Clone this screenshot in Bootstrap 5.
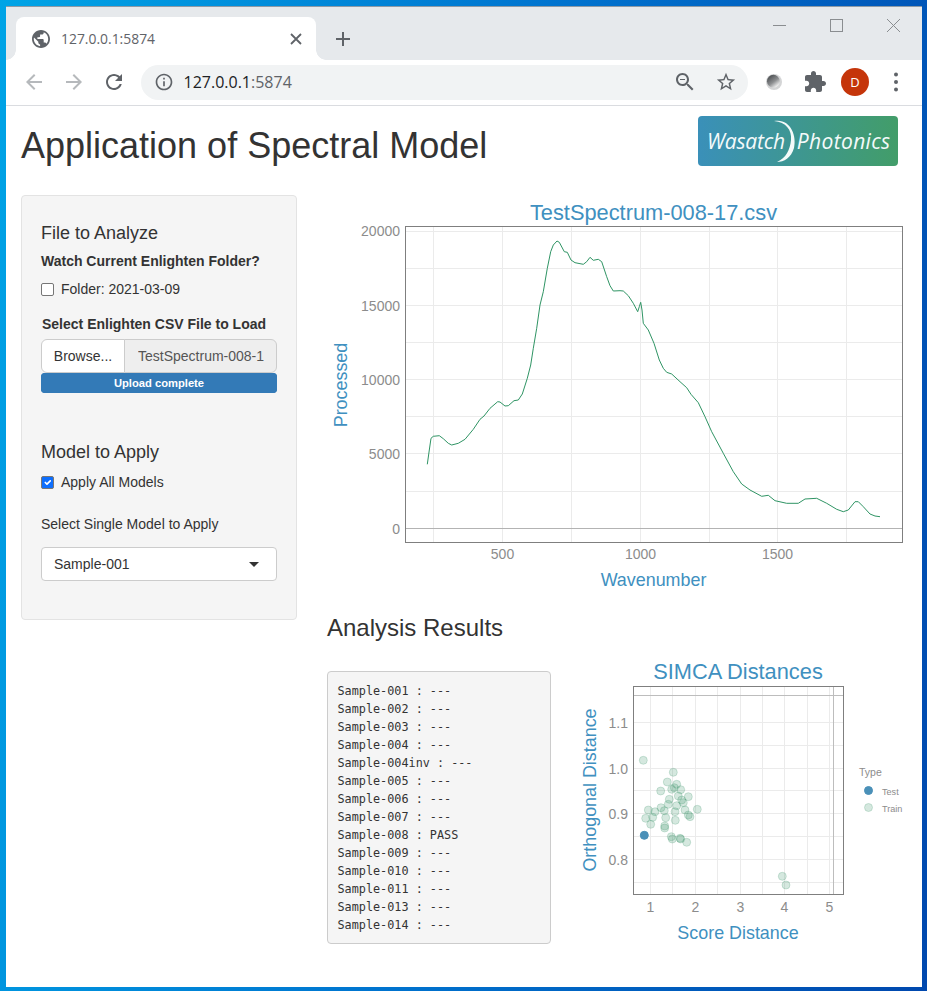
<!DOCTYPE html>
<html lang="en">
<head>
    <meta charset="UTF-8">
    <meta name="viewport" content="width=device-width, initial-scale=1.0">
    <title>Application of Spectral Model</title>
    <link href="https://cdn.jsdelivr.net/npm/bootstrap@5.3.3/dist/css/bootstrap.min.css" rel="stylesheet">
    <style>
      html, body { height: 100%; }
      body {
        background: linear-gradient(100deg, #00a4e6 0%, #0074cf 50%, #0048ae 100%);
        padding: 6px 5px 4px 6px;
        font-family: "Liberation Sans", Arial, sans-serif;
        font-size: 14px;
        line-height: 20px;
        color: #333;
        overflow: hidden;
      }
      .app-window {
        height: 100%;
        background: #fff;
        overflow: hidden;
      }
      /* browser chrome */
      .tab-strip {
        height: 54px;
        background: #e6e9ec;
        border-top: 1px solid #8d9aa6;
        padding-left: 10px;
      }
      .browser-tab {
        position: relative;
        width: 300px;
        height: 43px;
        margin-top: 10px;
        padding: 0 14px 0 16px;
        background: #fff;
        border-radius: 8px 8px 0 0;
        font-family: "Open Sans", sans-serif;
        font-size: 13.9px;
        color: #5f6368;
      }
      .browser-tab::before, .browser-tab::after {
        content: "";
        position: absolute;
        bottom: 0;
        width: 10px;
        height: 10px;
      }
      .browser-tab::before { left: -10px; background: radial-gradient(circle at 0 0, #e6e9ec 9.5px, #fff 10px); }
      .browser-tab::after { right: -10px; background: radial-gradient(circle at 100% 0, #e6e9ec 9.5px, #fff 10px); }
      .tab-label { margin-left: 11px; }
      .new-tab { margin: 10px 0 0 20px; }
      .win-btn { width: 57px; height: 37px; }
      .tool-bar {
        height: 46px;
        padding: 0 0 1px 15.5px;
        border-bottom: 1px solid #dadce0;
      }
      .tool-slot { width: 24px; height: 24px; }
      .tool-right { width: 28px; height: 28px; margin-left: 12.5px; }
      .omni-box {
        width: 607px;
        height: 35px;
        margin-left: 15px;
        padding: 0 11px 0 13px;
        background: #f1f3f4;
        border-radius: 18px;
        font-family: "Open Sans", sans-serif;
        font-size: 16px;
        color: #202124;
      }
      .omni-text { margin-left: 10px; }
      .omni-zoom { margin-right: 18px; }
      .omni-port { color: #5f6368; }
      .avatar-dot {
        border-radius: 50%;
        background: #c5350a;
        color: #fff;
        font-family: "Open Sans", sans-serif;
        font-size: 13px;
      }
      /* page */
      .page-head {
        padding: 10px 24px 0 15px;
        margin-bottom: 29px;
      }
      .page-title {
        margin: 10px 0 0;
        font-size: 36px;
        line-height: 40px;
        font-weight: 400;
      }
      .brand-logo {
        position: relative;
        width: 200px;
        height: 50px;
        padding-left: 9px;
        border-radius: 4px;
        background: linear-gradient(90deg, #3a90b9, #429d69);
        color: #f4fafa;
        font-family: "Open Sans", sans-serif;
        font-style: italic;
        font-size: 21px;
        letter-spacing: -.2px;
      }
      .brand-logo svg { position: absolute; left: 0; top: 0; }
      .brand-right { margin-left: 12px; letter-spacing: .35px; }
      .page-body { padding-left: 15px; gap: 30px; }
      .side-well {
        width: 276px;
        height: 425px;
        padding: 27px 19px 0;
        background: #f5f5f5;
        border: 1px solid #e3e3e3;
        border-radius: 4px;
      }
      .well-title {
        margin: 0;
        font-size: 18px;
        line-height: 20px;
        font-weight: 400;
      }
      .field-label { font-weight: 700; }
      .file-label { margin: 15px 0 5px; padding-left: 1px; }
      .model-title { margin: 49px 0 10px; }
      .single-label { margin-top: 22px; }
      .check-row { height: 20px; }
      .check-row .form-check-input {
        width: 13px;
        height: 13px;
        margin: 0 7px 0 0;
        border-color: #767676;
        border-radius: 2px;
      }
      .file-group { height: 34px; }
      .file-group .btn {
        width: 84px;
        padding: 6px 0;
        font-size: 14px;
        line-height: 20px;
        color: #333;
        background: #fff;
        border-color: #ccc;
      }
      .file-group .form-control {
        padding: 6px 12px 6px 13px;
        font-size: 14px;
        line-height: 20px;
        color: #555;
        background: #eee;
        border-color: #ccc;
      }
      .upload-bar { height: 20px; border-radius: 4px; background: #337ab7; }
      .upload-bar .progress-bar { background: #337ab7; font-size: 11.2px; font-weight: 700; }
      .model-pick {
        height: 34px;
        margin-top: 13px;
        padding: 0 17px 0 12px;
        background: #fff;
        border: 1px solid #ccc;
        border-radius: 4px;
      }
      .model-caret {
        border-top: 5px solid #333;
        border-left: 5px solid transparent;
        border-right: 5px solid transparent;
      }
      .main-area { width: 580px; }
      .main-area svg { display: block; }
      .section-title {
        margin: 20px 0 14px;
        font-size: 24px;
        line-height: 26px;
        font-weight: 400;
      }
      .result-box {
        width: 224px;
        margin: 16px 24px 0 0;
        padding: 9.5px;
        background: #f5f5f5;
        border: 1px solid #ccc;
        border-radius: 4px;
        color: #333;
        font-family: "DejaVu Sans Mono", monospace;
        font-size: 11.8px;
        line-height: 18px;
        overflow: hidden;
        flex: none;
      }
      .plot-svg text { font-family: "Liberation Sans", Arial, sans-serif; }
      .plot-title { font-size: 21.8px; fill: #4090c0; }
      .plot-axis { font-size: 17.9px; fill: #4090c0; }
      .plot-tick { font-size: 14px; fill: #8c8c8c; }
      .plot-legend { font-size: 10.5px; fill: #8c8c8c; }
      .plot-key { font-size: 9.1px; fill: #8c8c8c; }
    </style>
</head>
<body>
<div class="app-window d-flex flex-column">

  <div class="tab-strip d-flex">
    <div class="browser-tab d-flex align-items-center">
      <svg width="18" height="18" viewBox="2 2 20 20" fill="#5f6368"><path d="M12 2C6.48 2 2 6.48 2 12s4.48 10 10 10 10-4.48 10-10S17.52 2 12 2zm-1 17.93c-3.95-.49-7-3.85-7-7.93 0-.62.08-1.21.21-1.79L9 15v1c0 1.1.9 2 2 2v1.93zm6.9-2.54c-.26-.81-1-1.39-1.9-1.39h-1v-3c0-.55-.45-1-1-1H8v-2h2c.55 0 1-.45 1-1V7h2c1.1 0 2-.9 2-2v-.41c2.93 1.19 5 4.06 5 7.41 0 2.08-.8 3.97-2.1 5.39z"/></svg>
      <span class="tab-label flex-grow-1">127.0.0.1:5874</span>
      <svg width="12" height="12" viewBox="0 0 12 12" stroke="#5f6368" stroke-width="1.8"><path d="M1 1l10 10M11 1L1 11"/></svg>
    </div>
    <svg class="new-tab align-self-center" width="14" height="14" viewBox="0 0 14 14" stroke="#5f6368" stroke-width="2"><path d="M7 0v14M0 7h14"/></svg>
    <div class="ms-auto d-flex align-self-start">
      <div class="win-btn d-flex align-items-center justify-content-center"><svg width="13" height="13" viewBox="0 0 13 13" stroke="#8a8d90"><path d="M0 6.5h13"/></svg></div>
      <div class="win-btn d-flex align-items-center justify-content-center"><svg width="13" height="13" viewBox="0 0 13 13" fill="none" stroke="#8a8d90"><rect x=".5" y=".5" width="12" height="12"/></svg></div>
      <div class="win-btn d-flex align-items-center justify-content-center"><svg width="13" height="13" viewBox="0 0 13 13" stroke="#8a8d90"><path d="M0 0l13 13M13 0L0 13"/></svg></div>
    </div>
  </div>

  <div class="tool-bar d-flex align-items-center flex-shrink-0">
    <svg class="tool-slot me-3" viewBox="0 0 24 24" fill="#b6b9bc"><path d="M20 11H7.83l5.59-5.59L12 4l-8 8 8 8 1.41-1.41L7.83 13H20v-2z"/></svg>
    <svg class="tool-slot me-3" viewBox="0 0 24 24" fill="#b6b9bc"><path d="M4 11h12.17l-5.59-5.59L12 4l8 8-8 8-1.41-1.41L16.17 13H4v-2z"/></svg>
    <svg class="tool-slot" viewBox="0 0 24 24" fill="#5f6368"><path d="M17.65 6.35C16.2 4.9 14.21 4 12 4c-4.42 0-7.99 3.58-7.99 8s3.57 8 7.99 8c3.73 0 6.84-2.55 7.73-6h-2.08c-.82 2.33-3.04 4-5.65 4-3.31 0-6-2.69-6-6s2.69-6 6-6c1.66 0 3.14.69 4.22 1.78L13 11h7V4l-2.35 2.35z"/></svg>
    <div class="omni-box d-flex align-items-center">
      <svg width="20" height="20" viewBox="0 0 24 24" fill="#5f6368"><path d="M11 7h2v2h-2zm0 4h2v6h-2zm1-9C6.48 2 2 6.48 2 12s4.48 10 10 10 10-4.48 10-10S17.52 2 12 2zm0 18c-4.41 0-8-3.59-8-8s3.59-8 8-8 8 3.59 8 8-3.59 8-8 8z"/></svg>
      <span class="omni-text flex-grow-1">127.0.0.1<span class="omni-port">:5874</span></span>
      <svg width="24" height="24" viewBox="0 0 24 24" fill="#5f6368" class="omni-zoom"><path d="M15.5 14h-.79l-.28-.27C15.41 12.59 16 11.11 16 9.5 16 5.91 13.09 3 9.5 3S3 5.91 3 9.5 5.91 16 9.5 16c1.61 0 3.09-.59 4.23-1.57l.27.28v.79l5 4.99L20.49 19l-4.99-5zm-6 0C7.01 14 5 11.99 5 9.5S7.01 5 9.5 5 14 7.01 14 9.5 11.99 14 9.5 14zM7 9h5v1H7z"/></svg>
      <svg width="22" height="22" viewBox="0 0 24 24" fill="#5f6368"><path d="M22 9.24l-7.19-.62L12 2 9.19 8.63 2 9.24l5.46 4.73L5.82 21 12 17.27 18.18 21l-1.63-7.03L22 9.24zM12 15.4l-3.76 2.27 1-4.28-3.32-2.88 4.38-.38L12 6.1l1.71 4.04 4.38.38-3.32 2.88 1 4.28L12 15.4z"/></svg>
    </div>
    <svg class="tool-right" viewBox="0 0 28 28">
      <defs><linearGradient id="orbFill" x1=".2" y1=".1" x2=".8" y2=".9"><stop offset="0" stop-color="#4f5255"/><stop offset=".55" stop-color="#8c8e90"/><stop offset="1" stop-color="#f2f2f2"/></linearGradient></defs>
      <circle cx="14" cy="14" r="8" fill="#d4d5d6"/>
      <circle cx="13.4" cy="13.2" r="6.4" fill="url(#orbFill)"/>
    </svg>
    <svg class="tool-right" viewBox="-2 -2 28 28" fill="#5f6368"><path d="M20.5 11H19V7c0-1.1-.9-2-2-2h-4V3.5C13 2.12 11.88 1 10.5 1S8 2.12 8 3.5V5H4c-1.1 0-1.99.9-1.99 2v3.8H3.5c1.49 0 2.7 1.21 2.7 2.7s-1.21 2.7-2.7 2.7H2V20c0 1.1.9 2 2 2h3.8v-1.5c0-1.49 1.21-2.7 2.7-2.7 1.49 0 2.7 1.21 2.7 2.7V22H17c1.1 0 2-.9 2-2v-4h1.5c1.38 0 2.5-1.12 2.5-2.5S21.88 11 20.5 11z"/></svg>
    <div class="tool-right avatar-dot d-flex align-items-center justify-content-center">D</div>
    <svg class="tool-right" viewBox="0 0 28 28" fill="#5f6368"><circle cx="14" cy="6.5" r="2"/><circle cx="14" cy="14" r="2"/><circle cx="14" cy="21.5" r="2"/></svg>
  </div>

  <div class="page-head d-flex justify-content-between align-items-start">
    <h1 class="page-title">Application of Spectral Model</h1>
    <div class="brand-logo d-flex align-items-center">
      <span>Wasatch</span><span class="brand-right">Photonics</span>
      <svg width="200" height="50" viewBox="0 0 200 50" fill="#f4fafa"><path d="M76 5C92 2 99 19 96 32C93 42 86 46 79 46C88 42 92 34 93 24C94 14 88 6 76 5Z"/></svg>
    </div>
  </div>

  <div class="page-body d-flex align-items-start">
    <div class="side-well flex-shrink-0">
      <h4 class="well-title mb-2">File to Analyze</h4>
      <div class="field-label mb-2">Watch Current Enlighten Folder?</div>
      <div class="check-row d-flex align-items-center">
        <input class="form-check-input" type="checkbox" id="watchFolder">
        <label for="watchFolder">Folder: 2021-03-09</label>
      </div>
      <div class="field-label file-label">Select Enlighten CSV File to Load</div>
      <div class="input-group file-group flex-nowrap">
        <label class="btn">Browse...</label>
        <input type="text" class="form-control" value="TestSpectrum-008-17.csv" readonly>
      </div>
      <div class="progress upload-bar">
        <div class="progress-bar w-100">Upload complete</div>
      </div>
      <h4 class="well-title model-title">Model to Apply</h4>
      <div class="check-row d-flex align-items-center">
        <input class="form-check-input" type="checkbox" id="applyAll" checked>
        <label for="applyAll">Apply All Models</label>
      </div>
      <div class="single-label">Select Single Model to Apply</div>
      <div class="model-pick d-flex align-items-center justify-content-between">
        <span>Sample-001</span>
        <span class="model-caret"></span>
      </div>
    </div>

    <div class="main-area flex-shrink-0">
      <svg id="spectrumPlot" class="plot-svg" width="580" height="400" viewBox="327 195 580 400"></svg>
      <h3 class="section-title">Analysis Results</h3>
      <div class="d-flex align-items-start">
        <pre class="result-box">Sample-001 : ---
Sample-002 : ---
Sample-003 : ---
Sample-004 : ---
Sample-004inv : ---
Sample-005 : ---
Sample-006 : ---
Sample-007 : ---
Sample-008 : PASS
Sample-009 : ---
Sample-010 : ---
Sample-011 : ---
Sample-013 : ---
Sample-014 : ---</pre>
        <svg id="simcaPlot" class="plot-svg flex-shrink-0" width="340" height="290" viewBox="575 655 340 290"></svg>
      </div>
    </div>
  </div>
</div>

<script src="https://cdn.jsdelivr.net/npm/bootstrap@5.3.3/dist/js/bootstrap.bundle.min.js"></script>
<script>
// curve traced by hand, in page pixels
const spectrum = [[427.3,464.3],[429.3,450],[431,438.3],[433.3,436.3],[439.3,435.7],[443.3,438.7],[448.3,443.3],[451.7,445],[458.3,443.3],[465,439.3],[473.3,429.3],[480,419.3],[484,416],[490,408.3],[497.7,401.7],[500,402],[505,406],[508.3,405.7],[514,400.7],[518.3,400],[522.3,394],[527.3,378.3],[530.7,365],[533.3,348.3],[536.7,328.3],[540,305],[543.3,291.7],[547.3,268.3],[550.7,251.7],[553.3,245],[557,241],[559.3,242.3],[564.3,251.7],[567.3,252.3],[571,260],[575,262.7],[583.3,264.3],[586.7,261.7],[590,257.3],[593.3,260.3],[598.3,259.3],[601.7,261.7],[606.7,276.7],[610,285.7],[613.3,291],[620,290.7],[623.3,291],[628.3,295.7],[633.3,303.3],[637.7,311.7],[639.3,306.7],[640.7,302.3],[642,310],[643.3,323.3],[648.3,330],[654,343.3],[659.3,360],[663.3,368.3],[666.7,372.3],[671.7,374],[680,381.7],[686.7,387.7],[691,394.3],[698.3,402.7],[705,416.7],[711.7,431.7],[723.3,453.3],[733.3,471.7],[741.7,484],[750,490],[761.7,496.3],[768.3,495.3],[775,500.7],[786.7,503.3],[798.3,503.3],[805,499],[816.7,498.3],[826.7,503.3],[836.7,509.3],[843.3,511.7],[848.3,510],[855,501.7],[858.3,501.7],[863.3,506.7],[870,514],[875,516],[880,516.7]];

const trainPoints = [[55,61],[145,97],[127,126],[155,133],[140,148],[148,143],[167,149],[107,153],[190,170],[160,168],[133,178],[170,180],[175,188],[130,193],[108,203],[155,197],[217,208],[70,210],[90,215],[118,212],[180,210],[150,215],[190,225],[195,230],[62,235],[83,232],[122,233],[151,241],[77,253],[119,258],[119,264],[139,290],[142,297],[165,295],[167,297],[185,307]]
  .map(p => [625 + p[0] / 3, 740 + p[1] / 3])
  .concat([[782.3,876.3],[786,885]]);

function gridLines(xs, ys, box) {
  const v = xs.map(x => `<path d="M${x} ${box.top}V${box.bottom}" stroke="#ebebeb"/>`);
  const h = ys.map(y => `<path d="M${box.left} ${y}H${box.right}" stroke="#ebebeb"/>`);
  return v.concat(h).join('');
}

function frame(box) {
  return `<rect x="${box.left}" y="${box.top}" width="${box.right - box.left}" height="${box.bottom - box.top}" fill="none" stroke="#7f7f7f"/>`;
}

function drawSpectrum() {
  const box = { left: 405.5, right: 902.5, top: 226.5, bottom: 542.5 };
  let out = gridLines([433.5,502.5,571.5,640.5,709.5,777.5,846.5], [231.5,268.5,305.5,342.5,379.5,416.5,453.5,491.5], box);
  out += `<path d="M${box.left} 528.5H${box.right}" stroke="#b3b3b3"/>`;
  out += `<polyline points="${spectrum.join(' ')}" fill="none" stroke="#2f9464" stroke-width="1"/>`;
  out += frame(box);
  [['20000',236],['15000',310.5],['10000',385],['5000',459],['0',534]].forEach(t => {
    out += `<text class="plot-tick" x="400" y="${t[1]}" text-anchor="end">${t[0]}</text>`;
  });
  [['500',502.5],['1000',640.5],['1500',777.5]].forEach(t => {
    out += `<text class="plot-tick" x="${t[1]}" y="559" text-anchor="middle">${t[0]}</text>`;
  });
  out += `<text class="plot-title" x="653.5" y="220" text-anchor="middle">TestSpectrum-008-17.csv</text>`;
  out += `<text class="plot-axis" x="653.5" y="586" text-anchor="middle">Wavenumber</text>`;
  out += `<text class="plot-axis" transform="translate(347 385) rotate(-90)" text-anchor="middle">Processed</text>`;
  document.getElementById('spectrumPlot').innerHTML = out;
}

function drawSimca() {
  const box = { left: 633.5, right: 843.5, top: 686.5, bottom: 894.5 };
  let out = gridLines([650.5,672.5,695.5,717.5,740.5,762.5,784.5,807.5,829.5], [722.5,745.5,768.5,790.5,813.5,836.5,859.5,882.5], box);
  out += `<path d="M${box.left} 695.5H${box.right}M833.5 ${box.top}V${box.bottom}" stroke="#bdbdbd"/>`;
  trainPoints.forEach(p => {
    out += `<circle cx="${p[0].toFixed(1)}" cy="${p[1].toFixed(1)}" r="4" fill="#2e8b60" fill-opacity=".2" stroke="#2e8b60" stroke-opacity=".2"/>`;
  });
  out += `<circle cx="644.3" cy="835.3" r="4" fill="#4a90b8" stroke="#4a90b8"/>`;
  out += frame(box);
  [['1.1',727.5],['1.0',773.5],['0.9',819],['0.8',864.5]].forEach(t => {
    out += `<text class="plot-tick" x="628" y="${t[1]}" text-anchor="end">${t[0]}</text>`;
  });
  [['1',650.5],['2',695.5],['3',740.5],['4',784.5],['5',829.5]].forEach(t => {
    out += `<text class="plot-tick" x="${t[1]}" y="912" text-anchor="middle">${t[0]}</text>`;
  });
  out += `<text class="plot-title" x="738" y="679" text-anchor="middle">SIMCA Distances</text>`;
  out += `<text class="plot-axis" x="738" y="939" text-anchor="middle">Score Distance</text>`;
  out += `<text class="plot-axis" transform="translate(596 790) rotate(-90)" text-anchor="middle">Orthogonal Distance</text>`;
  out += `<text class="plot-legend" x="859" y="776">Type</text>`;
  out += `<circle cx="868.5" cy="790.5" r="4" fill="#4a90b8" stroke="#4a90b8"/>`;
  out += `<circle cx="868.5" cy="807.5" r="4" fill="#2e8b60" fill-opacity=".2" stroke="#2e8b60" stroke-opacity=".2"/>`;
  out += `<text class="plot-key" x="882" y="795">Test</text>`;
  out += `<text class="plot-key" x="882" y="812">Train</text>`;
  document.getElementById('simcaPlot').innerHTML = out;
}

drawSpectrum();
drawSimca();
</script>
</body>
</html>
